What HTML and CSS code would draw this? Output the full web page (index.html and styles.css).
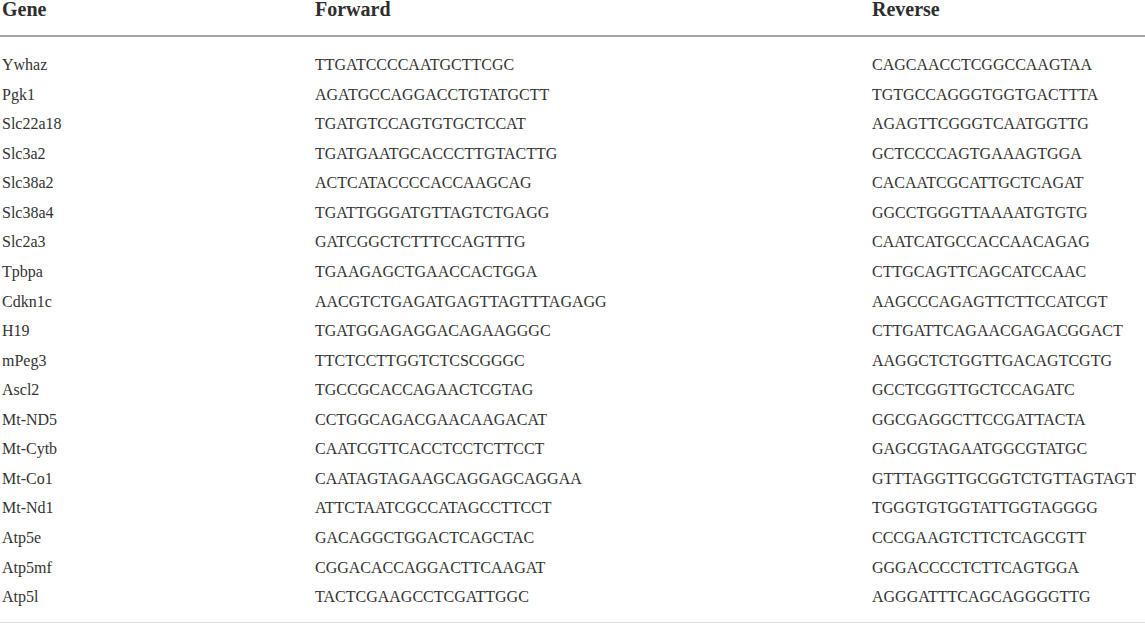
FILE: index.html
```
<!DOCTYPE html>
<html lang="en">
<head>
<meta charset="utf-8">
<title>Primer table</title>
<link rel="stylesheet" href="styles.css">
</head>
<body>
<table class="primers">
  <colgroup>
    <col class="c-gene">
    <col class="c-fwd">
    <col class="c-rev">
  </colgroup>
  <thead>
    <tr><th>Gene</th><th>Forward</th><th>Reverse</th></tr>
  </thead>
  <tbody>
    <tr><td>Ywhaz</td><td>TTGATCCCCAATGCTTCGC</td><td>CAGCAACCTCGGCCAAGTAA</td></tr>
    <tr><td>Pgk1</td><td>AGATGCCAGGACCTGTATGCTT</td><td>TGTGCCAGGGTGGTGACTTTA</td></tr>
    <tr><td>Slc22a18</td><td>TGATGTCCAGTGTGCTCCAT</td><td>AGAGTTCGGGTCAATGGTTG</td></tr>
    <tr><td>Slc3a2</td><td>TGATGAATGCACCCTTGTACTTG</td><td>GCTCCCCAGTGAAAGTGGA</td></tr>
    <tr><td>Slc38a2</td><td>ACTCATACCCCACCAAGCAG</td><td>CACAATCGCATTGCTCAGAT</td></tr>
    <tr><td>Slc38a4</td><td>TGATTGGGATGTTAGTCTGAGG</td><td>GGCCTGGGTTAAAATGTGTG</td></tr>
    <tr><td>Slc2a3</td><td>GATCGGCTCTTTCCAGTTTG</td><td>CAATCATGCCACCAACAGAG</td></tr>
    <tr><td>Tpbpa</td><td>TGAAGAGCTGAACCACTGGA</td><td>CTTGCAGTTCAGCATCCAAC</td></tr>
    <tr><td>Cdkn1c</td><td>AACGTCTGAGATGAGTTAGTTTAGAGG</td><td>AAGCCCAGAGTTCTTCCATCGT</td></tr>
    <tr><td>H19</td><td>TGATGGAGAGGACAGAAGGGC</td><td>CTTGATTCAGAACGAGACGGACT</td></tr>
    <tr><td>mPeg3</td><td>TTCTCCTTGGTCTCSCGGGC</td><td>AAGGCTCTGGTTGACAGTCGTG</td></tr>
    <tr><td>Ascl2</td><td>TGCCGCACCAGAACTCGTAG</td><td>GCCTCGGTTGCTCCAGATC</td></tr>
    <tr><td>Mt-ND5</td><td>CCTGGCAGACGAACAAGACAT</td><td>GGCGAGGCTTCCGATTACTA</td></tr>
    <tr><td>Mt-Cytb</td><td>CAATCGTTCACCTCCTCTTCCT</td><td>GAGCGTAGAATGGCGTATGC</td></tr>
    <tr><td>Mt-Co1</td><td>CAATAGTAGAAGCAGGAGCAGGAA</td><td>GTTTAGGTTGCGGTCTGTTAGTAGT</td></tr>
    <tr><td>Mt-Nd1</td><td>ATTCTAATCGCCATAGCCTTCCT</td><td>TGGGTGTGGTATTGGTAGGGG</td></tr>
    <tr><td>Atp5e</td><td>GACAGGCTGGACTCAGCTAC</td><td>CCCGAAGTCTTCTCAGCGTT</td></tr>
    <tr><td>Atp5mf</td><td>CGGACACCAGGACTTCAAGAT</td><td>GGGACCCCTCTTCAGTGGA</td></tr>
    <tr><td>Atp5l</td><td>TACTCGAAGCCTCGATTGGC</td><td>AGGGATTTCAGCAGGGGTTG</td></tr>
  </tbody>
</table>
</body>
</html>
```

FILE: styles.css
```
html, body {
  margin: 0;
  padding: 0;
  background: #ffffff;
}

body {
  font-family: "Liberation Serif", "Times New Roman", serif;
  color: #333333;
}

.primers {
  width: 1145px;
  border-collapse: collapse;
  table-layout: fixed;
  border-bottom: 1px solid #dcdcdc;
}

.c-gene { width: 313px; }
.c-fwd { width: 557px; }
.c-rev { width: 275px; }

.primers th {
  font-size: 20px;
  font-weight: bold;
  line-height: 19px;
  text-align: left;
  padding: 0 0 16px 2px;
  border-bottom: 2px solid #a3a3a3;
  color: #2e2e2e;
}

.primers td {
  font-size: 16px;
  line-height: 29.56px;
  padding: 0 0 0 2px;
  white-space: nowrap;
}

.primers tbody tr:first-child td {
  padding-top: 13px;
}

.primers tbody tr:last-child td {
  padding-bottom: 10px;
}
```
